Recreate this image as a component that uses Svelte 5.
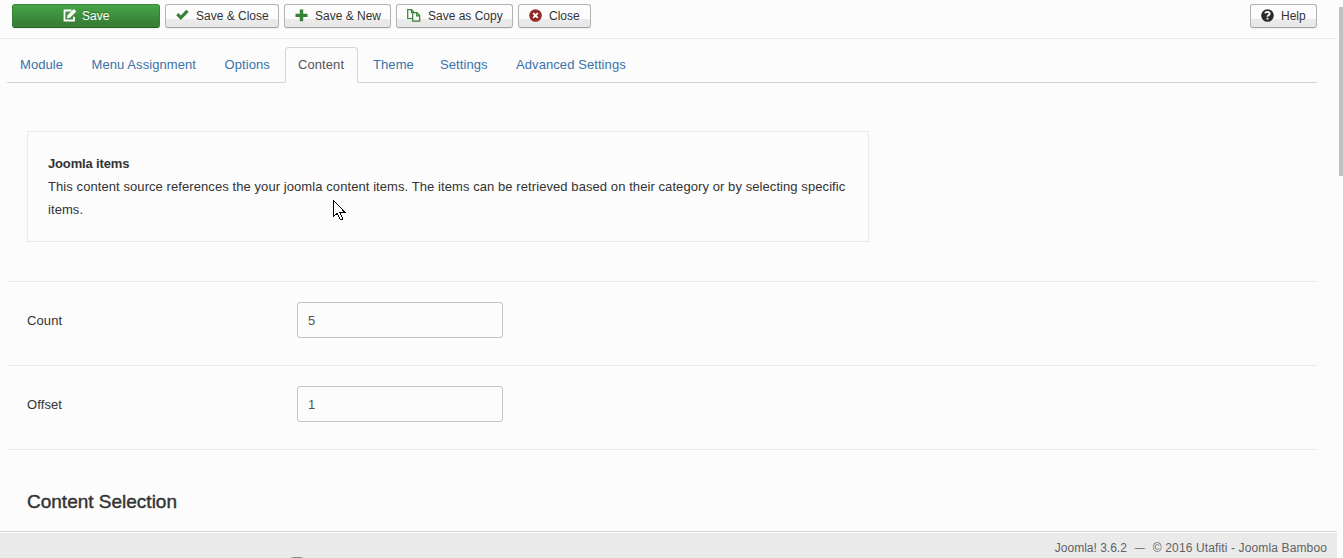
<script>
  const tabs = ['Module', 'Menu Assignment', 'Options', 'Content', 'Theme', 'Settings', 'Advanced Settings'];
  const active = 'Content';
  const fields = [
    { label: 'Count', value: '5' },
    { label: 'Offset', value: '1' }
  ];
</script>

<div class="page">
  <header class="toolbar">
    <button class="btn save">
      <svg width="14" height="13" viewBox="0 0 14 13"><path d="M8.500 1.500H1.500v10h9.500V7.800" fill="none" stroke="#fff" stroke-width="1.800"/><path d="M4 9.500l.6-3.200L10.800 0l2.500 2.400-6.300 6.400z" fill="#fff"/></svg>
      <span>Save</span>
    </button>
    <button class="btn close-save">
      <svg width="13" height="13" viewBox="0 0 13 13"><path d="M0.200 6.300L2.400 4.100 4.800 6.400 10.300 .7l2.400 2.300-7.900 8.100z" fill="#378137"/></svg>
      <span>Save &amp; Close</span>
    </button>
    <button class="btn new">
      <svg width="13" height="13" viewBox="0 0 13 13"><path d="M4.800 0.500h3.400v4.300h4.300v3.200H8.200v4.300H4.800V8H0.500V4.800h4.300z" fill="#378137"/></svg>
      <span>Save &amp; New</span>
    </button>
    <button class="btn copy">
      <svg width="14" height="13" viewBox="0 0 14 13"><path d="M5 9.500H.7V.7h3.800l2.500 2.500M4.500.7v3H7M5.700 3.700h4.200l2.800 2.800v5.600h-7zM9.700 3.700v3.200h3" fill="none" stroke="#378137" stroke-width="1.200"/></svg>
      <span>Save as Copy</span>
    </button>
    <button class="btn cancel">
      <svg width="13" height="13" viewBox="0 0 13 13"><circle cx="6.500" cy="6.500" r="6.300" fill="#942a25"/><path d="M4.200 4.200l4.600 4.600M8.800 4.200L4.200 8.800" stroke="#fff" stroke-width="1.800"/></svg>
      <span>Close</span>
    </button>
    <button class="btn help">
      <svg width="13" height="13" viewBox="0 0 13 13"><circle cx="6.500" cy="6.500" r="6.300" fill="#2b2b2b"/><path d="M4.200 4.300Q4.400 2.900 6.500 2.900T8.700 4.700Q8.700 5.700 7.400 6.200 6.500 6.600 6.500 7.700M6.500 8.700v1.700" fill="none" stroke="#fff" stroke-width="1.800"/></svg>
      <span>Help</span>
    </button>
  </header>

  <nav class="tabs">
    {#each tabs as tab}
      <a class:active={tab === active}>{tab}</a>
    {/each}
  </nav>

  <main>
    <section class="intro">
      <div class="note">
        <strong>Joomla items</strong>
        <p>This content source references the your joomla content items. The items can be retrieved based on their category or by selecting specific items.</p>
      </div>
    </section>
    {#each fields as field}
      <div class="field">
        <label for={field.label}>{field.label}</label>
        <input id={field.label} type="text" value={field.value} />
      </div>
    {/each}
    <section class="selection"><h2>Content Selection</h2></section>
  </main>

  <footer><span>Joomla! 3.6.2</span><span class="dash">—</span><span class="owner">© 2016 Utafiti - Joomla Bamboo</span></footer>
  <i class="peek"></i>
  <i class="scrollbar"></i>
  <svg class="cursor" width="13" height="21" viewBox="0 0 13 21" shape-rendering="crispEdges"><path d="M.5.7v16l3.700-3.500 3.100 6.700 2.600-1.100-3-6.600h5z" fill="#fff" stroke="#000"/></svg>
</div>

<style>
  :global(body) { margin: 0; background: #fcfcfc; }
  .page {
    position: relative;
    display: flex;
    flex-direction: column;
    width: 1343px;
    height: 558px;
    overflow: hidden;
    box-sizing: border-box;
    padding-right: 6px;
    background: #fcfcfc;
    color: #333;
    font: 13px/18px "Liberation Sans", Arial, sans-serif;
  }
  .toolbar {
    display: flex;
    gap: 5px;
    flex: none;
    box-sizing: border-box;
    height: 39px;
    padding: 4px 20px 0 12px;
    border-bottom: 1px solid #ebebeb;
  }
  .btn {
    display: flex;
    align-items: center;
    box-sizing: border-box;
    height: 24px;
    padding: 0 0 1px 10px;
    border: 1px solid #b3b3b3;
    border-bottom-color: #a2a2a2;
    border-radius: 3px;
    background: linear-gradient(#fcfcfc 0 14px, #ebebeb 14px, #e8e8e8);
    box-shadow: 0 1px 1px rgba(0, 0, 0, .06);
    color: #333;
    font: 12px/18px "Liberation Sans", Arial, sans-serif;
    white-space: nowrap;
  }
  .btn svg { flex: none; margin-right: 7px; }
  .btn.save {
    width: 148px;
    padding-left: 50px;
    border-color: #3b8a3b #348034 #246024;
    background: linear-gradient(#46a546, #378137 80%);
    color: #fff;
    text-shadow: 0 -1px 0 rgba(0, 0, 0, .25);
  }
  .save svg { margin-right: 5px; }
  .close-save { width: 114px; }
  .new { width: 107px; }
  .copy { width: 117px; }
  .cancel { width: 73px; }
  .help { width: 67px; margin-left: auto; }
  .tabs {
    display: grid;
    grid-template-columns: 71.500px 133px 73.500px 75px 67px 76px 136px;
    flex: none;
    box-sizing: border-box;
    height: 44px;
    margin: 0 20px 0 7px;
    padding-top: 8px;
    border-bottom: 1px solid #d5d5d5;
  }
  .tabs a {
    box-sizing: border-box;
    justify-self: start;
    height: 36px;
    padding: 8px 12px;
    border: 1px solid transparent;
    border-radius: 4px 4px 0 0;
    color: #3a72a9;
    letter-spacing: .08px;
    white-space: nowrap;
  }
  .tabs .active {
    width: 73px;
    border-color: #d5d5d5 #d5d5d5 #fcfcfc;
    background: #fcfcfc;
    color: #555;
  }
  main { flex: 1; margin: 0 20px 0 7px; min-height: 0; }
  .intro { box-sizing: border-box; height: 198px; padding: 48px 20px 0; }
  .note {
    box-sizing: border-box;
    width: 842px;
    height: 111px;
    padding: 20px;
    border: 1px solid #eaeaea;
    line-height: 23px;
  }
  .note strong { display: block; letter-spacing: -.15px; }
  p { margin: 0; letter-spacing: .078px; }
  .field {
    display: flex;
    box-sizing: border-box;
    height: 84px;
    padding: 20px;
    border-top: 1px solid #eaeaea;
  }
  .field label { width: 270px; padding-top: 10px; letter-spacing: .1px; }
  input {
    box-sizing: border-box;
    width: 206px;
    height: 36px;
    padding: 1px 10px 0;
    border: 1px solid #c4c4c4;
    border-radius: 3px;
    background: #fcfcfc;
    color: #555;
    font: 13px/18px "Liberation Sans", Arial, sans-serif;
  }
  .selection { padding: 40px 20px 0; border-top: 1px solid #eaeaea; }
  h2 {
    margin: 0;
    font-size: 19px;
    line-height: 24px;
    font-weight: 400;
    -webkit-text-stroke: .4px #333;
  }
  footer {
    display: flex;
    justify-content: flex-end;
    gap: 8px;
    flex: none;
    box-sizing: border-box;
    height: 27px;
    padding: 6px 10px 0 0;
    border-top: 1px solid #d4d4d4;
    background: #eaeaea;
    box-shadow: inset 0 1px 0 #fcfcfc;
    color: #626262;
    font-size: 12px;
    line-height: 20px;
  }
  .dash { font-size: 10px; }
  .owner { letter-spacing: .13px; }
  .peek { position: absolute; left: 290px; top: 557px; width: 14px; height: 1px; background: linear-gradient(90deg, transparent, #888 25% 75%, transparent); }
  .scrollbar { position: absolute; left: 1339px; top: 7px; width: 4px; height: 169px; background: #c1c1c1; }
  .cursor { position: absolute; left: 333px; top: 200px; }
</style>
